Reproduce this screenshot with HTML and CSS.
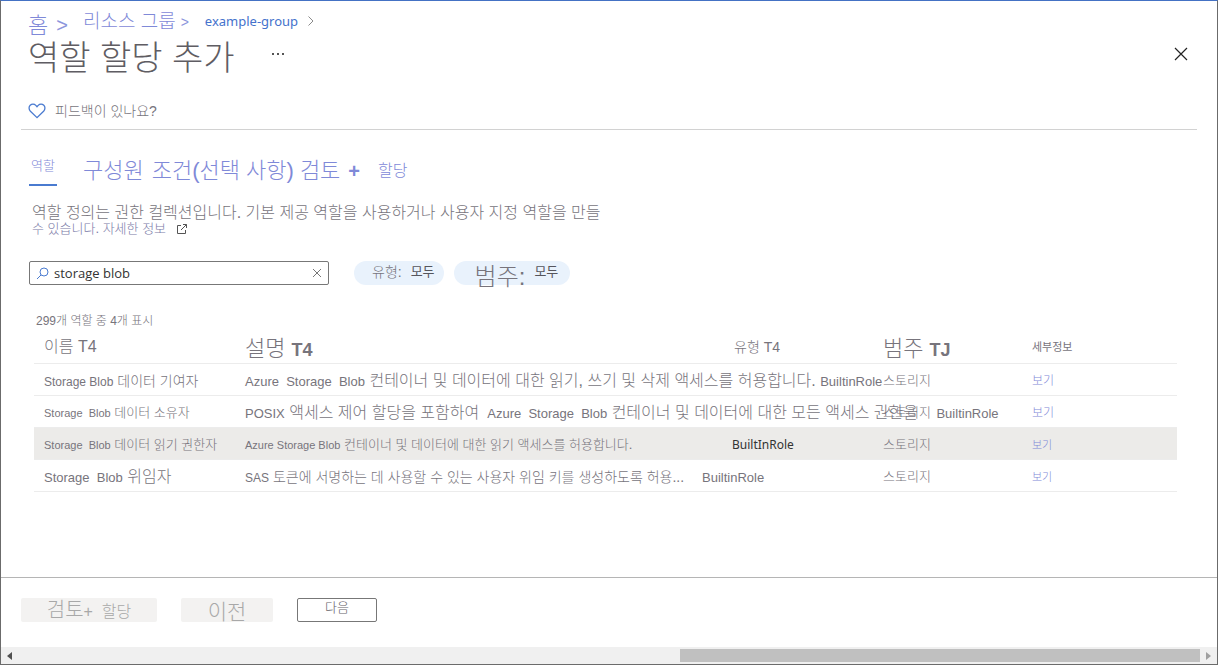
FILE: index.html
```html
<!DOCTYPE html>
<html lang="ko">
<head>
  <meta charset="UTF-8">
  <meta name="viewport" content="width=device-width, initial-scale=1.0">
  <title>역할 할당 추가</title>

  <link rel="stylesheet" href="styles.css">
</head>
<body>
  <div class="window">
    <header class="header">
      <nav class="breadcrumb">
        <a href="#" class="home">홈</a>
        <span class="sep">&gt;</span>
        <a href="#" class="groups">리소스 그룹</a>
        <span class="sep small">&gt;</span>
        <a href="#" class="current">example-group</a>
        <svg class="chevron" width="8" height="12" viewBox="0 0 8 12"><path d="M1.5 1.5 L6 6 L1.5 10.5"/></svg>
      </nav>
      <div class="title-row">
        <h1>역할 할당 추가</h1>
        <button class="more" aria-label="더 보기">
          <svg width="12" height="3" viewBox="0 0 12 3"><path d="M0 0h2v2H0zM5 0h2v2H5zM10 0h2v2h-2z"/></svg>
        </button>
        <button class="close" aria-label="닫기">
          <svg width="14" height="14" viewBox="0 0 14 14"><path d="M1 1 L13 13 M13 1 L1 13"/></svg>
        </button>
      </div>
      <a href="#" class="feedback">
        <svg width="18" height="16" viewBox="0 0 18 16"><path d="M9 14.6 L2.4 8.2 C0.6 6.3 0.7 3.7 2.2 2.3 C3.8 0.8 6.3 0.9 7.8 2.4 L9 3.7 L10.2 2.4 C11.7 0.9 14.2 0.8 15.8 2.3 C17.3 3.7 17.4 6.3 15.6 8.2 Z"/></svg>
        <span>피드백이 있나요?</span>
      </a>
    </header>

    <main class="content">
      <nav class="tabs">
        <a href="#" class="active">역할</a>
        <a href="#" class="large">구성원</a>
        <a href="#" class="large condition">조건(선택 사항)</a>
        <a href="#" class="large">검토</a>
        <a href="#" class="plus">+</a>
        <a href="#" class="medium">할당</a>
      </nav>

      <p class="intro">역할 정의는 권한 컬렉션입니다. 기본 제공 역할을 사용하거나 사용자 지정 역할을 만들</p>
      <p class="intro second">
        <a href="#">수 있습니다. 자세한 정보</a>
        <svg width="12" height="12" viewBox="0 0 12 12"><path d="M5 2.5H1.5V10.5H9.5V7 M7 1.5H10.5V5 M10.5 1.5L5 7"/></svg>
      </p>

      <div class="filters">
        <div class="search">
          <svg class="lens" width="13" height="13" viewBox="0 0 13 13"><circle cx="8" cy="5" r="4"/><path d="M5 8 L1 12"/></svg>
          <input type="text" value="storage blob" aria-label="역할 검색">
          <button aria-label="지우기">
            <svg width="10" height="10" viewBox="0 0 10 10"><path d="M1 1 L9 9 M9 1 L1 9"/></svg>
          </button>
        </div>
        <button class="pill">유형:<b>모두</b></button>
        <button class="pill category"><span>범주:</span><b>모두</b></button>
      </div>

      <p class="count">299개 역할 중 4개 표시</p>

      <table>
        <colgroup>
          <col class="col-name">
          <col class="col-desc">
          <col class="col-type">
          <col class="col-category">
          <col>
        </colgroup>
        <thead>
          <tr>
            <th class="k16">이름 T4</th>
            <th class="k22">설명 <b>T4</b></th>
            <th class="k14">유형 T4</th>
            <th class="k22">범주 <b>TJ</b></th>
            <th class="tiny">세부정보</th>
          </tr>
        </thead>
        <tbody>
          <tr>
            <td class="k14"><span class="l12">Storage Blob</span> 데이터 기여자</td>
            <td class="k16"><span class="l13">Azure&nbsp; Storage&nbsp; Blob</span> 컨테이너 및 데이터에 대한 읽기, 쓰기 및 삭제 액세스를 허용합니다. <span class="l13">BuiltinRole</span></td>
            <td></td>
            <td class="k13">스토리지</td>
            <td class="k12"><a href="#">보기</a></td>
          </tr>
          <tr>
            <td class="k13"><span class="l11">Storage&nbsp; Blob</span> 데이터 소유자</td>
            <td class="k16"><span class="l13">POSIX</span> 액세스 제어 할당을 포함하여 <span class="l13">&nbsp;Azure&nbsp; Storage&nbsp; Blob</span> 컨테이너 및 데이터에 대한 모든 액세스 권한을 <span class="l13 role">BuiltinRole</span></td>
            <td></td>
            <td class="k13">스토리지</td>
            <td class="k12"><a href="#">보기</a></td>
          </tr>
          <tr class="selected">
            <td class="k13"><span class="l11">Storage&nbsp; Blob</span> 데이터 읽기 권한자</td>
            <td class="k13"><span class="l11">Azure Storage Blob</span> 컨테이너 및 데이터에 대한 읽기 액세스를 허용합니다.</td>
            <td class="type">BuiltInRole</td>
            <td class="k13">스토리지</td>
            <td class="k11"><a href="#">보기</a></td>
          </tr>
          <tr>
            <td class="k16"><span class="l13">Storage&nbsp; Blob</span> 위임자</td>
            <td class="k14"><span class="l12">SAS</span> 토큰에 서명하는 데 사용할 수 있는 사용자 위임 키를 생성하도록 허용... <span class="l13 role">BuiltinRole</span></td>
            <td></td>
            <td class="k13">스토리지</td>
            <td class="k11"><a href="#">보기</a></td>
          </tr>
        </tbody>
      </table>
    </main>

    <footer class="footer">
      <button class="review" disabled>검토<span>+ &nbsp;할당</span></button>
      <button class="prev" disabled>이전</button>
      <button class="next">다음</button>
    </footer>

    <div class="scrollbar">
      <svg width="5" height="8" viewBox="0 0 5 8"><path d="M5 0v8L0 4z" fill="#505050"/></svg>
      <div class="track"><div class="thumb"></div></div>
      <svg width="5" height="8" viewBox="0 0 5 8"><path d="M0 0v8l5-4z" fill="#a0a0a0"/></svg>
    </div>
  </div>
</body>
</html>
```
FILE: styles.css
```css
* {
  box-sizing: border-box;
}

body {
  margin: 0;
  font-family: "Liberation Sans", "Noto Sans CJK KR", sans-serif;
  font-weight: 300;
  color: #77747c;
}

h1, p {
  margin: 0;
  font-weight: 300;
}

a {
  color: #7f89d8;
  text-decoration: none;
}

button, input {
  font: inherit;
  color: inherit;
  border: 0;
  padding: 0;
  background: none;
}

svg {
  display: block;
  flex: none;
  fill: none;
}

.window {
  display: flex;
  flex-direction: column;
  min-height: 100vh;
  border: 1px solid #6b6b6b;
  border-top-color: #4472c4;
}

/* header */
.header {
  margin: 0 20px;
  padding: 8px 8px 5px 7px;
  border-bottom: 1px solid #d2d2d2;
}

.breadcrumb {
  display: flex;
  align-items: center;
  height: 28px;
  line-height: 24px;
}

.home {
  font-size: 22px;
  padding-top: 6px;
}

.sep {
  font-size: 20px;
  color: #8c95dc;
  margin: 4px 15px 0 8px;
}

.groups {
  font-size: 19px;
  padding-bottom: 2px;
}

.sep.small {
  font-size: 14px;
  margin: 0 16px 2px 5px;
}

.current {
  font-family: "Noto Sans", sans-serif;
  font-size: 13px;
  font-weight: 400;
  color: #4472cc;
  padding-bottom: 5px;
}

.chevron {
  stroke: #8a8a8a;
  margin: 0 0 5px 9px;
}

.title-row {
  display: flex;
  align-items: center;
  height: 42px;
}

h1 {
  font-size: 34px;
  line-height: 42px;
  color: #5f5d63;
}

.more {
  margin: 0 auto 8px 37px;
}

.more path {
  fill: #555;
}

.close {
  margin: 0 1px 8px 0;
}

.close path {
  stroke: #222;
  stroke-width: 1.2;
}

.feedback {
  display: flex;
  align-items: center;
  gap: 9px;
  margin-top: 19px;
  font-size: 14px;
  line-height: 26px;
  color: #77747c;
}

.feedback path {
  stroke: #4a7bd0;
  stroke-width: 1.3;
}

/* content */
.content {
  flex: 1;
  padding: 26px 40px 24px 28px;
}

.tabs {
  display: flex;
  align-items: center;
  height: 30px;
  line-height: 34px;
}

.tabs .active {
  font-size: 13px;
  line-height: 20px;
  height: 30px;
  padding: 0 2px;
  margin-right: 26px;
  border-bottom: 2px solid #4a7bd0;
}

.tabs .large {
  font-size: 22px;
  margin-right: 8px;
}

.tabs .condition {
  margin-right: 6px;
}

.tabs .plus {
  font-size: 20px;
  font-weight: 700;
}

.tabs .medium {
  font-size: 16px;
  line-height: 30px;
  margin-left: 18px;
}

.intro {
  padding-left: 3px;
  margin-top: 19px;
  font-size: 16px;
  line-height: 16px;
}

.intro.second {
  display: flex;
  align-items: center;
  gap: 10px;
  margin-top: 0;
  font-size: 13px;
}

.intro a {
  color: #7b7ba8;
}

.intro path {
  stroke: #555;
}

.filters {
  display: flex;
  align-items: center;
  gap: 10px;
  margin-top: 24px;
}

.search {
  display: flex;
  align-items: center;
  width: 300px;
  height: 24px;
  padding: 0 6px;
  margin-right: 15px;
  border: 1px solid #777;
  border-radius: 2px;
}

.search input {
  flex: 1;
  min-width: 0;
  margin-left: 5px;
  font-family: "Open Sans", sans-serif;
  font-size: 13px;
  font-weight: 400;
  line-height: 20px;
  color: #333;
}

.lens {
  stroke: #4a7bd0;
}

.search button path {
  stroke: #777;
}

.pill {
  display: flex;
  justify-content: center;
  height: 24px;
  padding: 0 9px 0 18px;
  border-radius: 12px;
  background-color: #e9f2fc;
  font-size: 14px;
  line-height: 22px;
}

.pill b {
  margin-left: 9px;
  font-size: 13px;
  font-weight: 400;
  color: #55555c;
}

.pill.category {
  padding: 0 12px 0 21px;
}

.pill span {
  font-size: 24px;
  line-height: 32px;
}

.count {
  padding-left: 7px;
  margin-top: 27px;
  font-size: 12px;
  line-height: 18px;
}

/* roles */
table {
  width: calc(100% - 5px);
  margin: 1px 0 0 5px;
  table-layout: fixed;
  border-collapse: collapse;
  white-space: nowrap;
}

.col-name {
  width: 201px;
}

.col-desc {
  width: 489px;
}

.col-type, .col-category {
  width: 149px;
}

th, td {
  height: 32px;
  padding: 4px 0 0 10px;
  line-height: 20px;
  text-align: left;
  font-weight: 300;
  border-bottom: 1px solid #ececec;
}

th {
  padding-top: 0;
}

th.k22 {
  padding-top: 6px;
}

th b {
  font-size: 18px;
  font-weight: 700;
}

.selected {
  background-color: #ecebe9;
}

.type {
  padding-left: 8px;
  font-family: "Noto Sans", sans-serif;
  font-size: 12px;
  font-weight: 400;
  color: #333;
}

.tiny {
  font-size: 11px;
  font-weight: 400;
}

.k11 { font-size: 11px; }
.k12 { font-size: 12px; }
.k13 { font-size: 13px; }
.k14 { font-size: 14px; }
.k16 { font-size: 16px; }
.k22 { font-size: 22px; }

.l11 { font-size: 11px; }
.l12 { font-size: 12px; }
.l13 { font-size: 13px; }

.role {
  margin-left: 14px;
}

/* footer */
.footer {
  display: flex;
  gap: 24px;
  padding: 20px 20px 25px;
  border-top: 1px solid #b5b5b5;
}

.footer button {
  height: 24px;
  border-radius: 2px;
  background-color: #f3f2f1;
  color: #a8a8a8;
  line-height: 24px;
}

.footer .review {
  width: 136px;
  font-size: 20px;
}

.review span {
  font-size: 16px;
}

.footer .prev {
  width: 92px;
  font-size: 21px;
  line-height: 28px;
}

.footer .next {
  width: 80px;
  border: 1px solid #777;
  background-color: #fff;
  color: #66646a;
  font-size: 13px;
  line-height: 18px;
  padding-bottom: 4px;
}

.scrollbar {
  display: flex;
  align-items: center;
  height: 17px;
  padding: 0 6px;
  background-color: #f0f0f0;
}

.track {
  flex: 1;
  margin: 0 6px;
}

.thumb {
  width: 44%;
  height: 13px;
  margin-left: auto;
  background-color: #c0c0c0;
}
```
